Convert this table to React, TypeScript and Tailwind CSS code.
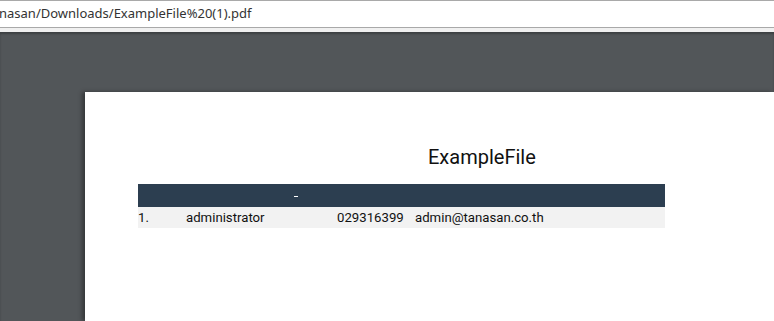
import React from 'react';

type Row = {
  no: string;
  name: string;
  phone: string;
  email: string;
};

const rows: Row[] = [
  { no: '1.', name: 'administrator', phone: '029316399', email: 'admin@tanasan.co.th' },
];

const App = () => {
  return (
    <div className="flex flex-col w-[774px] h-[321px] overflow-hidden bg-[#525659]">
      {/* address bar */}
      <div className="h-[28px] flex items-center bg-white border-t border-b border-[#a9a9a9] font-['Noto_Sans',sans-serif] text-[13px] text-[#333] whitespace-nowrap">
        <span className="-ml-[1px]">nasan/Downloads/ExampleFile%20(1).pdf</span>
      </div>
      <div className="h-[4px] bg-[#f0f0f0]" />

      {/* viewer */}
      <div className="flex-1 flex bg-[#525659] pl-[85px] pt-[60px] shadow-[inset_0_2px_2px_rgba(0,0,0,0.25)]">
        <div className="flex-1 bg-white shadow-[-3px_0_4px_rgba(0,0,0,0.35)] font-['Roboto',sans-serif] text-black">
          <h1 className="mt-[52px] ml-[343px] h-[40px] text-[20px] leading-[26px] text-[#111]">ExampleFile</h1>
          <div className="ml-[53px] w-[527px]">
            <div className="h-[23px] bg-[#2c3e50] relative">
              <span className="absolute left-[156px] top-[12px] w-[4px] h-[1px] bg-white" />
            </div>
            {rows.map((r) => (
              <div key={r.no} className="h-[21px] flex items-center bg-[#f2f2f2] text-[13.2px] text-[#111]">
                <span className="w-[48px]">{r.no}</span>
                <span className="w-[151px]">{r.name}</span>
                <span className="w-[78px]">{r.phone}</span>
                <span>{r.email}</span>
              </div>
            ))}
          </div>
        </div>
      </div>
    </div>
  );
};

export default App;
